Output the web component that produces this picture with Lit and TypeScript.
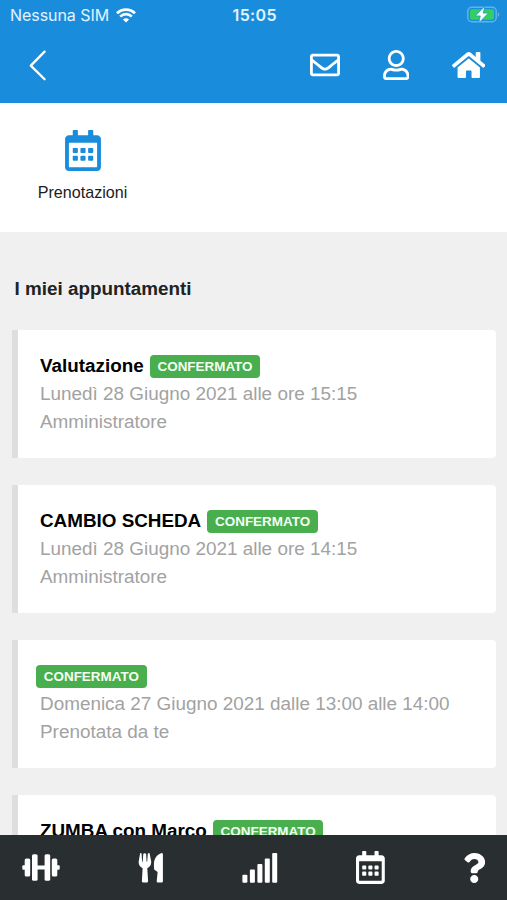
import { LitElement, html, css, svg, nothing } from "lit";
import { customElement, property } from "lit/decorators.js";

const CALENDAR =
  "M148 288h-40c-6.6 0-12-5.4-12-12v-40c0-6.6 5.4-12 12-12h40c6.6 0 12 5.4 12 12v40c0 6.6-5.4 12-12 12zm108-12v-40c0-6.6-5.4-12-12-12h-40c-6.6 0-12 5.4-12 12v40c0 6.6 5.4 12 12 12h40c6.6 0 12-5.4 12-12zm96 0v-40c0-6.6-5.4-12-12-12h-40c-6.6 0-12 5.4-12 12v40c0 6.6 5.4 12 12 12h40c6.6 0 12-5.4 12-12zm-96 96v-40c0-6.6-5.4-12-12-12h-40c-6.6 0-12 5.4-12 12v40c0 6.6 5.4 12 12 12h40c6.6 0 12-5.4 12-12zm-96 0v-40c0-6.6-5.4-12-12-12h-40c-6.6 0-12 5.4-12 12v40c0 6.6 5.4 12 12 12h40c6.6 0 12-5.4 12-12zm192 0v-40c0-6.6-5.4-12-12-12h-40c-6.6 0-12 5.4-12 12v40c0 6.6 5.4 12 12 12h40c6.6 0 12-5.4 12-12zm96-260v352c0 26.5-21.5 48-48 48H48c-26.5 0-48-21.5-48-48V112c0-26.5 21.5-48 48-48h48V12c0-6.6 5.4-12 12-12h40c6.6 0 12 5.4 12 12v52h128V12c0-6.6 5.4-12 12-12h40c6.6 0 12 5.4 12 12v52h48c26.5 0 48 21.5 48 48zm-48 346V160H48v298c0 3.3 2.7 6 6 6h340c3.3 0 6-2.7 6-6z";
const HOME =
  "M280.37 148.26L96 300.11V464a16 16 0 0 0 16 16l112.06-.29a16 16 0 0 0 15.92-16V368a16 16 0 0 1 16-16h64a16 16 0 0 1 16 16v95.64a16 16 0 0 0 16 16.05L464 480a16 16 0 0 0 16-16V300L295.67 148.26a12.19 12.19 0 0 0-15.3 0zM571.6 251.47L488 182.56V44.05a12 12 0 0 0-12-12h-56a12 12 0 0 0-12 12v72.61L318.47 43a48 48 0 0 0-61 0L4.34 251.47a12 12 0 0 0-1.6 16.9l25.5 31A12 12 0 0 0 45.15 301l235.22-193.74a12.19 12.19 0 0 1 15.3 0L530.9 301a12 12 0 0 0 16.9-1.6l25.5-31a12 12 0 0 0-1.7-16.93z";
const ENVELOPE =
  "M464 64H48C21.49 64 0 85.49 0 112v288c0 26.51 21.49 48 48 48h416c26.51 0 48-21.49 48-48V112c0-26.51-21.49-48-48-48zm0 48v40.805c-22.422 18.259-58.168 46.651-134.587 106.49-16.841 13.247-50.201 45.072-73.413 44.701-23.208.375-56.579-31.459-73.413-44.701C106.18 199.465 70.425 171.067 48 152.805V112h416zM48 400V214.398c22.914 18.251 55.409 43.862 104.938 82.646 21.857 17.205 60.134 55.186 103.062 54.955 42.717.231 80.509-37.199 103.053-54.947 49.528-38.783 82.032-64.401 104.947-82.653V400H48z";
const USER =
  "M313.6 304c-28.7 0-42.5 16-89.6 16-47.1 0-60.8-16-89.6-16C60.2 304 0 364.2 0 438.4V464c0 26.5 21.5 48 48 48h352c26.5 0 48-21.5 48-48v-25.6c0-74.2-60.2-134.4-134.4-134.4zM400 464H48v-25.6c0-47.6 38.8-86.4 86.4-86.4 14.6 0 38.3 16 89.6 16 51.7 0 74.9-16 89.6-16 47.6 0 86.4 38.8 86.4 86.4V464zM224 288c79.5 0 144-64.5 144-144S303.5 0 224 0 80 64.5 80 144s64.5 144 144 144zm0-240c52.9 0 96 43.1 96 96s-43.1 96-96 96-96-43.1-96-96 43.1-96 96-96z";
const QUESTION =
  "M202.021 0C122.202 0 70.503 32.703 29.914 91.026c-7.363 10.58-5.093 25.086 5.178 32.874l43.138 32.709c10.373 7.865 25.132 6.026 33.253-4.148 25.049-31.381 43.63-49.449 82.757-49.449 30.764 0 68.816 19.799 68.816 49.631 0 22.552-18.617 34.134-48.993 51.164-35.423 19.86-82.299 44.576-82.299 106.405V320c0 13.255 10.745 24 24 24h72.471c13.255 0 24-10.745 24-24v-5.773c0-42.86 125.268-44.645 125.268-160.627C377.504 66.256 286.902 0 202.021 0zM192 373.459c-38.196 0-69.271 31.075-69.271 69.271 0 38.195 31.075 69.27 69.271 69.27s69.271-31.075 69.271-69.271-31.075-69.27-69.271-69.27z";

const icon = (box: string, w: number, h: number, d: string) => html`
  <svg width=${w} height=${h} viewBox=${box} fill="currentColor">${svg`<path d=${d}></path>`}</svg>`;

@customElement("status-bar")
class StatusBar extends LitElement {
  static styles = css`
    :host {
      display: grid;
      grid-template-columns: 1fr auto 1fr;
      align-items: center;
      height: 29px;
      padding: 0 7.5px 0 10px;
      color: #e2f3ff;
      font: 400 16px/29px Inter, sans-serif;
    }
    .carrier, .time { padding-top: 1px; }
    .carrier { display: flex; align-items: center; gap: 6.5px; letter-spacing: -0.06px; }
    .time { font-weight: 600; letter-spacing: 0.4px; }
    .battery { justify-self: end; }
    svg { display: block; }
  `;
  render() {
    return html`
      <div class="carrier">
        <span>Nessuna SIM</span>
        <svg width="20" height="15" viewBox="0 0 20 15" fill="none" stroke="#fff" stroke-width="2.7">
          <path d="M1 5.3C6 0.3 14 0.3 19 5.3"></path>
          <path d="M4.2 8.6C7.5 5.4 12.5 5.4 15.8 8.6"></path>
          <path d="M10 14.6L6.9 11.5C8.6 9.9 11.4 9.9 13.1 11.5Z" fill="#fff" stroke="none"></path>
        </svg>
      </div>
      <span class="time">15:05</span>
      <svg class="battery" width="33" height="18" viewBox="0 0 33 18">
        <rect x="0.8" y="1.3" width="28.4" height="14.4" rx="4" fill="none" stroke="#62b1e8" stroke-width="1.5"></rect>
        <path d="M30.8 6c2 .8 2 4.2 0 5z" fill="#62b1e8"></path>
        <rect x="3" y="3.3" width="24" height="10.4" rx="2" fill="#32d060"></rect>
        <path d="M17.8 0.3L8.4 9.9h4.9l-1.5 7 9.6-9.8h-5.2z" fill="#fff" stroke="#198ddc" stroke-width="0.7"></path>
      </svg>`;
  }
}

@customElement("top-bar")
class TopBar extends LitElement {
  static styles = css`
    :host { display: flex; align-items: center; height: 72px; padding: 0 22px 0 29px; color: #fff; box-sizing: border-box; }
    svg { display: block; }
    .back { margin-right: auto; }
    .mail { margin-right: 43px; }
    .user { margin-right: 42.5px; }
  `;
  render() {
    return html`
      <div class="back">
        <svg width="18" height="32" viewBox="0 0 18 32" fill="none" stroke="#fff" stroke-width="2.3" stroke-linecap="round" stroke-linejoin="round">
          <path d="M15.6 2.6L1.8 16.6L15.6 30.2"></path>
        </svg>
      </div>
      <div class="mail">${icon("0 0 512 512", 30, 30, ENVELOPE)}</div>
      <div class="user">${icon("0 0 448 512", 26.5, 30, USER)}</div>
      <div class="home">${icon("0 0 576 512", 33.5, 30, HOME)}</div>`;
  }
}

@customElement("appointment-card")
class AppointmentCard extends LitElement {
  @property() name = "";
  @property() when = "";
  @property() by = "";
  static styles = css`
    :host {
      display: block;
      box-sizing: border-box;
      height: 128.5px;
      padding: 22px 21px 0 22px;
      background: #fff;
      border-left: 6.5px solid #dedede;
      border-radius: 0 4px 4px 0;
      font: 400 18.9px/28.4px "Liberation Sans", Arial, sans-serif;
      color: #a2a2a2;
      white-space: nowrap;
    }
    .head { display: flex; align-items: center; gap: 6px; height: 28.4px; }
    .name { color: #000; font-weight: 700; font-size: 18.85px; line-height: 27.6px; }
    .badge {
      margin-top: 1.4px;
      height: 23px;
      padding: 0 7.8px;
      border-radius: 4px;
      background: #49ae4d;
      color: #f4fff4;
      font-weight: 700;
      font-size: 13.45px;
      line-height: 23.5px;
    }
    .badge.alone { margin-left: -4px; }
  `;
  render() {
    return html`
      <div class="head">
        ${this.name ? html`<span class="name">${this.name}</span>` : nothing}
        <span class="badge ${this.name ? "" : "alone"}">CONFERMATO</span>
      </div>
      <div class="when">${this.when}</div>
      <div class="by">${this.by}</div>`;
  }
}

@customElement("bottom-nav")
class BottomNav extends LitElement {
  static styles = css`
    :host {
      display: flex;
      align-items: center;
      justify-content: space-between;
      box-sizing: border-box;
      height: 65px;
      padding: 0 21.5px 0 22px;
      background: #292e31;
      color: #fff;
    }
    svg { display: block; }
    .weights { margin-right: -0.5px; }
  `;
  render() {
    return html`
      <svg class="weights" width="38" height="30" viewBox="0 0 38 30" fill="currentColor">
        <rect x="0.3" y="12.3" width="4" height="4.4" rx="1"></rect>
        <rect x="33.7" y="12.3" width="4" height="4.4" rx="1"></rect>
        <rect x="2.7" y="5.5" width="5.5" height="18" rx="1.6"></rect>
        <rect x="29.8" y="5.5" width="5.5" height="18" rx="1.6"></rect>
        <rect x="10" y="1.2" width="5.6" height="26.6" rx="1.6"></rect>
        <rect x="22.6" y="1.2" width="5.6" height="26.6" rx="1.6"></rect>
        <rect x="15" y="12.5" width="8" height="4"></rect>
      </svg>
      <svg width="26" height="30" viewBox="0 0 26 30" fill="currentColor">
        <path d="M2.1 0.3Q3.4 -.3 3.6 0.8L4.1 8.6Q4.4 9.4 4.7 8.6L5.3 0.8Q6.7 -.3 8.1 0.8L8.6 8.6Q8.9 9.4 9.2 8.6L9.8 0.8Q10.4 -.3 11.6 0.3L13.2 8.5Q13.6 12.8 9.3 15.3L10.1 28.2Q10 29.6 8.8 29.6H5.2Q4 29.6 3.9 28.2L4.6 15.3Q0.3 12.8 0.7 8.5Z"></path>
        <path d="M23.6 0Q24.9 0 24.9 1.4V28.2Q24.9 29.6 23.6 29.6H19.9Q18.6 29.6 18.7 28.2L19.6 18.9L16.2 16.5Q14.2 3 23.6 0Z"></path>
      </svg>
      <svg width="36" height="30" viewBox="0 0 36 30" fill="currentColor">
        <rect x="0.4" y="21.7" width="5" height="8" rx="1"></rect>
        <rect x="7.9" y="16.4" width="5" height="13.3" rx="1"></rect>
        <rect x="15.4" y="10.9" width="5" height="18.8" rx="1"></rect>
        <rect x="22.8" y="5.5" width="5" height="24.2" rx="1"></rect>
        <rect x="30.2" y="0" width="5" height="29.7" rx="1"></rect>
      </svg>
      ${icon("0 0 448 512", 28.8, 33, CALENDAR)}
      ${icon("0 0 384 512", 22.5, 30, QUESTION)}`;
  }
}

@customElement("app-root")
class AppRoot extends LitElement {
  static styles = css`
    :host {
      display: flex;
      flex-direction: column;
      height: 900px;
      overflow: hidden;
      background: #f0f0f0;
      font-family: "Liberation Sans", Arial, sans-serif;
    }
    .header { flex: none; height: 103px; background: #198ddc; }
    .shortcuts { flex: none; box-sizing: border-box; height: 128.5px; padding: 27px 0 0 32px; background: #fff; }
    .shortcut { width: 101px; display: flex; flex-direction: column; align-items: center; gap: 10px; color: #198ddc; }
    .shortcut svg { display: block; }
    .label { color: #1c1c1c; font-size: 16.1px; line-height: 22px; }
    .content { flex: 1; min-height: 0; overflow: hidden; padding: 43px 11px 0 12px; }
    .title { margin: 0 0 27px 2.5px; font-size: 18.85px; line-height: 28px; font-weight: 700; color: #222; }
    .list { display: flex; flex-direction: column; gap: 26.6px; }
    bottom-nav { flex: none; }
  `;
  private items = [
    { name: "Valutazione", when: "Lunedì 28 Giugno 2021 alle ore 15:15", by: "Amministratore" },
    { name: "CAMBIO SCHEDA", when: "Lunedì 28 Giugno 2021 alle ore 14:15", by: "Amministratore" },
    { name: "", when: "Domenica 27 Giugno 2021 dalle 13:00 alle 14:00", by: "Prenotata da te" },
    { name: "ZUMBA con Marco", when: "", by: "" },
  ];
  render() {
    return html`
      <div class="header"><status-bar></status-bar><top-bar></top-bar></div>
      <div class="shortcuts">
        <div class="shortcut">
          ${icon("0 0 448 512", 36, 41, CALENDAR)}
          <span class="label">Prenotazioni</span>
        </div>
      </div>
      <div class="content">
        <h2 class="title">I miei appuntamenti</h2>
        <div class="list">
          ${this.items.map(
            (i) => html`<appointment-card .name=${i.name} .when=${i.when} .by=${i.by}></appointment-card>`
          )}
        </div>
      </div>
      <bottom-nav></bottom-nav>`;
  }
}
